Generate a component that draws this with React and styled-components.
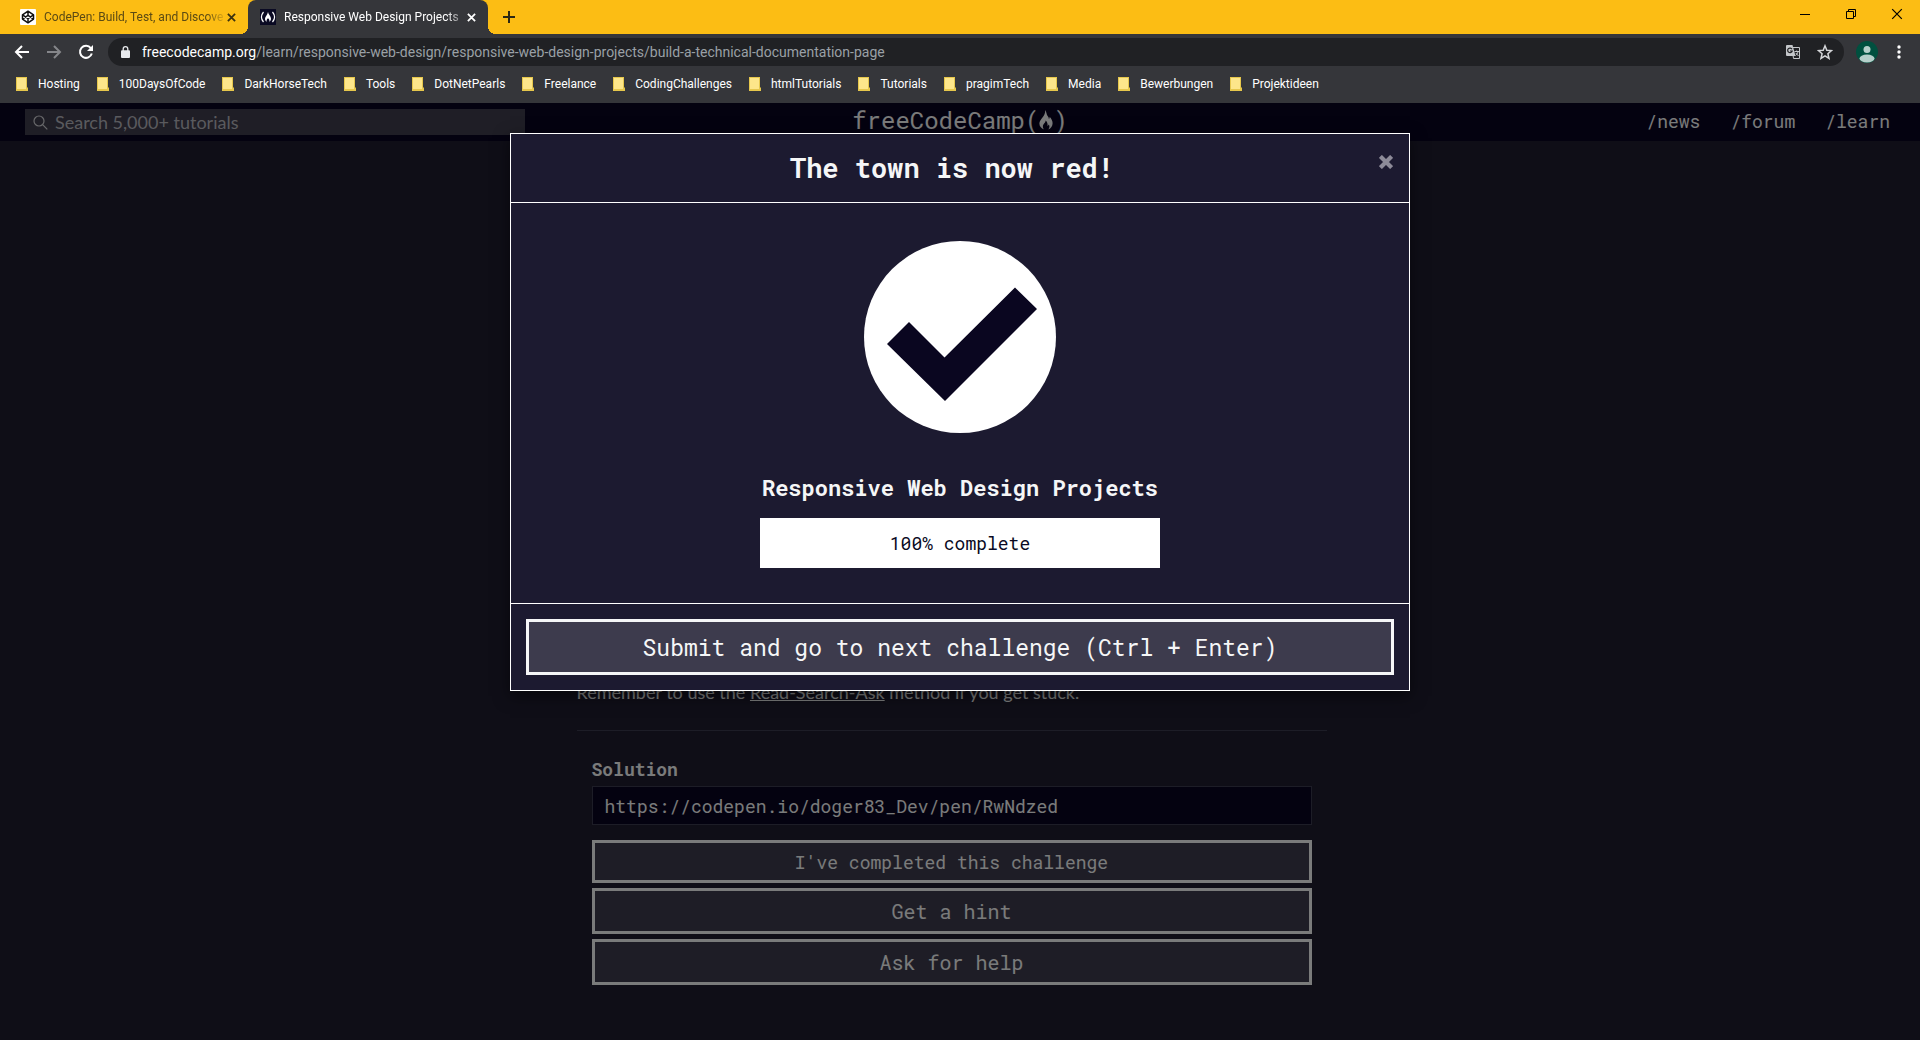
import React from "react";
import styled, { createGlobalStyle } from "styled-components";

const MONO = '"Roboto Mono", "Liberation Mono", monospace';
const UI = '"Segoe UI", Roboto, sans-serif';
const BODY = 'Lato, sans-serif';

const GlobalStyle = createGlobalStyle`
  *, *::before, *::after { box-sizing: border-box; }
  html, body { margin: 0; padding: 0; background: #0f0e18; }
  button, input { font: inherit; color: inherit; margin: 0; }
  h1, h2, p { margin: 0; }
`;

const Window = styled.div`
  display: flex;
  flex-direction: column;
  min-height: 100vh;
`;

/* ---------- browser frame ---------- */

const Frame = styled.header`
  background: #35363a;
  font-family: ${UI};
  font-size: 12px;
  color: #fff;
`;

const TabStrip = styled.div`
  display: flex;
  align-items: stretch;
  height: 34px;
  padding-left: 8px;
  background: #fcbd14;
`;

const Tab = styled.div`
  position: relative;
  display: flex;
  align-items: center;
  width: 240px;
  padding: 0 12px;
  border-radius: 8px 8px 0 0;
  background: ${(p) => (p.$active ? "#35363a" : "transparent")};
  color: ${(p) => (p.$active ? "#fff" : "#5b4a14")};

  &::before, &::after {
    content: "";
    display: ${(p) => (p.$active ? "block" : "none")};
    position: absolute;
    bottom: 0;
    width: 8px;
    height: 8px;
  }
  &::before {
    left: -8px;
    background: radial-gradient(circle at 0 0, transparent 8px, #35363a 8px);
  }
  &::after {
    right: -8px;
    background: radial-gradient(circle at 100% 0, transparent 8px, #35363a 8px);
  }
`;

const TabTitle = styled.span`
  flex: 1;
  min-width: 0;
  padding-left: 8px;
  overflow: hidden;
  white-space: nowrap;
  mask-image: linear-gradient(to right, #000 calc(100% - 20px), transparent);
`;

const IconButton = styled.button`
  display: flex;
  align-items: center;
  justify-content: center;
  width: ${(p) => p.$w || 16}px;
  height: ${(p) => p.$h || 16}px;
  padding: 0;
  border: 0;
  background: none;
  color: ${(p) => p.$color || "inherit"};
`;

const WindowControls = styled.div`
  display: flex;
  margin-left: auto;
`;

const Toolbar = styled.div`
  display: flex;
  align-items: center;
  gap: 16px;
  height: 36px;
  padding: 0 16px 0 14px;
`;

const Address = styled.div`
  flex: 1;
  display: flex;
  align-items: center;
  gap: 12px;
  height: 28px;
  margin: 0 -4px 0 -2px;
  padding: 0 11px 0 13px;
  border-radius: 14px;
  background: #202124;
  color: #e8eaed;
`;

const Url = styled.span`
  flex: 1;
  font-size: 14px;
  color: #9aa0a6;
  white-space: nowrap;
  overflow: hidden;
`;

const Host = styled.span`
  color: #fff;
`;

const AddressActions = styled.div`
  display: flex;
  gap: 16px;
`;

const Bookmarks = styled.nav`
  display: flex;
  align-items: center;
  gap: 17px;
  height: 33px;
  padding: 0 16px 5px;
  overflow: hidden;
`;

const Bookmark = styled.a`
  display: flex;
  align-items: center;
  gap: 10px;
  color: #fff;
  text-decoration: none;
  white-space: nowrap;
`;

/* ---------- page ---------- */

const Page = styled.div`
  position: relative;
  flex: 1;
  display: flex;
  flex-direction: column;
  background: #1e1c2e;
  color: #f5f6f7;
`;

const SiteNav = styled.div`
  display: grid;
  grid-template-columns: 1fr auto 1fr;
  align-items: center;
  height: 38px;
  padding: 0 25px;
  background: #090520;
`;

const Search = styled.label`
  display: flex;
  align-items: center;
  gap: 7px;
  width: 500px;
  height: 26px;
  padding-left: 8px;
  background: #3e3c4c;
  color: #d0d0d5;

  input {
    flex: 1;
    min-width: 0;
    padding: 0;
    border: 0;
    outline: 0;
    background: none;
    font: 18px/26px ${BODY};
  }
  input::placeholder { color: #b4b4bc; opacity: 1; }
`;

const Logo = styled.a`
  display: flex;
  align-items: center;
  padding-bottom: 4px;
  font: 24px/32px ${MONO};
  color: #f5f6f7;
  text-decoration: none;
`;

const SiteLinks = styled.nav`
  display: flex;
  justify-content: flex-end;
  gap: 30px;
  padding: 0 5px 2px 0;
  font: 18px/26px ${MONO};

  a { color: #f5f6f7; text-decoration: none; }
`;

const Scroller = styled.div`
  flex: 1;
  display: flex;
  flex-direction: column;
  justify-content: flex-end;
  padding: 0 17px 55px 0;
`;

const Main = styled.main`
  width: 100%;
  max-width: 750px;
  margin: 0 auto;
`;

const Instructions = styled.p`
  font: 18px/26px ${BODY};
  padding-bottom: 25px;
  border-bottom: 1px solid #3b3b4f;

  a { color: inherit; }
`;

const Form = styled.form`
  display: flex;
  flex-direction: column;
  gap: 5px;
  padding: 25px 15px 0;
  font: 18px/26px ${MONO};
`;

const Field = styled.label`
  display: flex;
  flex-direction: column;
  gap: 4px;
  padding-bottom: 10px;
  font-weight: 700;

  input {
    height: 39px;
    padding: 0 12px;
    border: 1px solid #3b3b4f;
    background: #090520;
    font-weight: 400;
    outline: 0;
  }
`;

const Button = styled.button`
  width: 100%;
  height: ${(p) => p.$h}px;
  padding: 0;
  border: 3px solid #f5f6f7;
  background: #3d3b4d;
  color: #f5f6f7;
  font: ${(p) => p.$size}px/26px ${MONO};
`;

/* ---------- modal ---------- */

const Backdrop = styled.div`
  position: absolute;
  inset: 0;
  padding: 30px 10px;
  background: rgba(0, 0, 0, 0.5);
`;

const Dialog = styled.section`
  max-width: 900px;
  margin: 0 auto;
  border: 1px solid #fff;
  background: #1c1a30;
  box-shadow: 0 5px 15px rgba(0, 0, 0, 0.5);
  font-family: ${MONO};
`;

const DialogHeader = styled.div`
  display: flex;
  align-items: flex-start;
  height: 69px;
  padding: 15px;
  border-bottom: 1px solid #fff;

  h1 {
    flex: 1;
    font-size: 27px;
    line-height: 38px;
    text-align: center;
  }
`;

const DialogBody = styled.div`
  display: flex;
  flex-direction: column;
  align-items: center;
  padding: 38px 15px 35px;

  h2 {
    margin: 40px 0 15px;
    font-size: 22px;
    line-height: 30px;
  }
`;

const Progress = styled.div`
  width: 400px;
  max-width: 100%;
  background: #fff;
  color: #0a0a23;
  font-size: 18px;
  line-height: 50px;
  text-align: center;
`;

const DialogFooter = styled.div`
  padding: 15px;
  border-top: 1px solid #fff;
`;

/* ---------- icons ---------- */

const Cross = ({ size = 9, width = 2 }) => (
  <svg width={size} height={size} viewBox="0 0 10 10" stroke="currentColor" strokeWidth={width} fill="none">
    <path d="M1 1l8 8M9 1l-8 8" />
  </svg>
);

const CodepenIcon = () => (
  <svg width="16" height="16" viewBox="0 0 16 16">
    <rect width="16" height="16" rx="1" fill="#fff" />
    <g fill="none" stroke="#111" strokeWidth="1.5" strokeLinejoin="round">
      <path d="M8 2.2l5.5 3.7v4.2L8 13.8l-5.5-3.7V5.9z" />
      <path d="M2.5 5.9L8 9.7l5.5-3.8M2.5 10.1L8 6.3l5.5 3.8M8 2.2v4.1M8 9.7v4.1" />
    </g>
  </svg>
);

const Flame = ({ width, height }) => (
  <svg width={width} height={height} viewBox="0 0 14 20" fill="currentColor">
    <path d="M6.2 0C7.8 2.5 7.2 4.3 9 6.5c.5.7.9 1.5.9 2.4.6-.5.9-1.3.7-2.2C12.5 8.6 13.6 11 13.6 13.3c0 3-1.7 5.2-4.2 6.2 1.3-1.8 1.4-3.6.3-4.9-.1.7-.5 1.2-1.2 1.3.4-2.2-.3-4.3-1.9-5.5.2 2.2-2.7 3.4-2.7 6 0 1.3.5 2.3 1.3 3C2 18.5.4 16.2.4 13.5.4 9.2 6.7 6.5 6.2 0z" />
  </svg>
);

const FccIcon = () => (
  <svg width="16" height="16" viewBox="0 0 16 16">
    <rect width="16" height="16" fill="#0a0a23" />
    <path d="M3.500 3C1 6 1 10 3.500 13M12.500 3c2.500 3 2.500 7 0 10" fill="none" stroke="#fff" strokeWidth="1.200" />
    <path d="M8 3c.3 2.500 3 4 3 6.800 0 1.300-.7 2.300-1.700 2.900.4-1.300.1-2.300-1.300-3.500-1.300 1.200-1.700 2.200-1.300 3.500C5.700 12.100 5 11.100 5 9.800 5 7.500 7.500 6 8 3z" fill="#fff" />
  </svg>
);

const Arrow = ({ flip }) => (
  <svg width="16" height="16" viewBox="0 0 16 16" fill="none" stroke="currentColor" strokeWidth="2">
    <path d={flip ? "M1 8h13M8 2l6 6-6 6" : "M15 8H2M8 2L2 8l6 6"} />
  </svg>
);

const Reload = () => (
  <svg width="16" height="16" viewBox="0 0 16 16">
    <path d="M12.8 4.2A6 6 0 1 0 13.8 9.5" fill="none" stroke="currentColor" strokeWidth="2" />
    <path d="M15 1v6H9z" fill="currentColor" />
  </svg>
);

const Lock = () => (
  <svg width="9" height="12" viewBox="0 0 9 12">
    <path d="M2.2 5V3a2.3 2.3 0 0 1 4.6 0v2" fill="none" stroke="currentColor" strokeWidth="1.3" />
    <rect y="4.3" width="9" height="7.7" rx="1" fill="currentColor" />
  </svg>
);

const Translate = () => (
  <svg width="16" height="16" viewBox="0 0 16 16">
    <path d="M7 3.5h7.500v11H8.500z" fill="none" stroke="#c4c7ca" />
    <path d="M2 1h5.500l3 11H2a1 1 0 0 1-1-1V2a1 1 0 0 1 1-1z" fill="#c4c7ca" />
    <path d="M7 5.2A2.3 2.3 0 1 0 7.2 7H5" fill="none" stroke="#202124" strokeWidth="1.2" />
    <path d="M9.500 7.500H14M11.700 6.500v1M13 7.500c-.4 2-1.300 3-2.500 4M10.800 9l2.700 3" fill="none" stroke="#c4c7ca" />
  </svg>
);

const Star = () => (
  <svg width="16" height="16" viewBox="0 0 16 16" fill="none" stroke="#d4d6d9" strokeWidth="1.5">
    <path d="M8 1.8l1.8 4.4 4.7.4-3.6 3.1 1.1 4.6L8 11.8l-4 2.5 1.100-4.6L1.500 6.6l4.7-.4z" />
  </svg>
);

const Avatar = () => (
  <svg width="22" height="22" viewBox="0 0 22 22">
    <circle cx="11" cy="11" r="11" fill="#00503f" />
    <circle cx="11" cy="8.5" r="3.5" fill="#b5cfca" />
    <ellipse cx="11" cy="17.5" rx="7.5" ry="4" fill="#b5cfca" />
  </svg>
);

const Dots = () => (
  <svg width="4" height="14" viewBox="0 0 4 14" fill="currentColor">
    <circle cx="2" cy="2" r="1.7" />
    <circle cx="2" cy="7" r="1.7" />
    <circle cx="2" cy="12" r="1.7" />
  </svg>
);

const Folder = () => (
  <svg width="12" height="14" viewBox="0 0 12 14">
    <path d="M0 0h11v10l1 1v3H0z" fill="#e6c74c" />
    <path d="M1 1h9v11H1z" fill="#fde68a" />
  </svg>
);

const Magnifier = () => (
  <svg width="15" height="15" viewBox="0 0 15 15" fill="none" stroke="currentColor" strokeWidth="1.2">
    <circle cx="6" cy="6" r="5" />
    <path d="M9.6 9.6L14.3 14.3" />
  </svg>
);

const CheckMark = () => (
  <svg width="192" height="192" viewBox="0 0 192 192" role="img" aria-label="Passed">
    <circle cx="96" cy="96" r="96" fill="#fff" />
    <path d="M23 103l22-22 35.5 35.5L151 46.5 173 68 81 160z" fill="#0a0620" />
  </svg>
);

const bookmarks = [
  "Hosting", "100DaysOfCode", "DarkHorseTech", "Tools", "DotNetPearls", "Freelance",
  "CodingChallenges", "htmlTutorials", "Tutorials", "pragimTech", "Media", "Bewerbungen", "Projektideen",
];

export default function App() {
  return (
    <Window>
      <GlobalStyle />
      <Frame>
        <TabStrip>
          <Tab>
            <CodepenIcon />
            <TabTitle>CodePen: Build, Test, and Discove</TabTitle>
            <IconButton aria-label="Close tab" $w={9} $color="#3b3210"><Cross /></IconButton>
          </Tab>
          <Tab $active>
            <FccIcon />
            <TabTitle>Responsive Web Design Projects</TabTitle>
            <IconButton aria-label="Close tab" $w={9}><Cross /></IconButton>
          </Tab>
          <IconButton aria-label="New tab" $w={42} $h={34} $color="#2c2814">
            <svg width="12" height="12" viewBox="0 0 12 12" stroke="currentColor" strokeWidth="2">
              <path d="M6 0v12M0 6h12" />
            </svg>
          </IconButton>
          <WindowControls>
            <IconButton aria-label="Minimize" $w={46} $h={28} $color="#000">
              <svg width="10" height="10" viewBox="0 0 10 10" stroke="currentColor"><path d="M0 5.5h10" /></svg>
            </IconButton>
            <IconButton aria-label="Restore" $w={46} $h={28} $color="#000">
              <svg width="10" height="10" viewBox="0 0 10 10" fill="none" stroke="currentColor">
                <path d="M.5 2.5h7v7h-7zM2.500 2.500v-2h7v7h-2" />
              </svg>
            </IconButton>
            <IconButton aria-label="Close window" $w={46} $h={28} $color="#000"><Cross size={12} width={1} /></IconButton>
          </WindowControls>
        </TabStrip>
        <Toolbar>
          <IconButton aria-label="Back"><Arrow /></IconButton>
          <IconButton aria-label="Forward" $color="#85868a"><Arrow flip /></IconButton>
          <IconButton aria-label="Reload"><Reload /></IconButton>
          <Address>
            <Lock />
            <Url>
              <Host>freecodecamp.org</Host>
              /learn/responsive-web-design/responsive-web-design-projects/build-a-technical-documentation-page
            </Url>
            <AddressActions>
              <IconButton aria-label="Translate"><Translate /></IconButton>
              <IconButton aria-label="Bookmark this page"><Star /></IconButton>
            </AddressActions>
          </Address>
          <IconButton aria-label="Profile" $w={22} $h={22}><Avatar /></IconButton>
          <IconButton aria-label="Menu" $w={10}><Dots /></IconButton>
        </Toolbar>
        <Bookmarks>
          {bookmarks.map((name) => (
            <Bookmark href="#" key={name}><Folder />{name}</Bookmark>
          ))}
        </Bookmarks>
      </Frame>

      <Page>
        <SiteNav>
          <Search>
            <Magnifier />
            <input type="search" aria-label="Search" placeholder="Search 5,000+ tutorials" />
          </Search>
          <Logo href="#">freeCodeCamp(<Flame width={14} height={20} />)</Logo>
          <SiteLinks>
            <a href="#">/news</a>
            <a href="#">/forum</a>
            <a href="#">/learn</a>
          </SiteLinks>
        </SiteNav>
        <Scroller>
          <Main>
            <Instructions>
              Remember to use the <a href="#">Read-Search-Ask</a> method if you get stuck.
            </Instructions>
            <Form>
              <Field>
                Solution
                <input type="url" defaultValue="https://codepen.io/doger83_Dev/pen/RwNdzed" />
              </Field>
              <Button type="button" $h={43} $size={18}>I've completed this challenge</Button>
              <Button type="button" $h={46} $size={20}>Get a hint</Button>
              <Button type="button" $h={46} $size={20}>Ask for help</Button>
            </Form>
          </Main>
        </Scroller>
        <Backdrop>
          <Dialog role="dialog" aria-labelledby="dialog-title">
            <DialogHeader>
              <h1 id="dialog-title">The town is now red!</h1>
              <IconButton aria-label="Close" $w={16} $h={26} $color="#8d8b98"><Cross size={14} width={3} /></IconButton>
            </DialogHeader>
            <DialogBody>
              <CheckMark />
              <h2>Responsive Web Design Projects</h2>
              <Progress>100% complete</Progress>
            </DialogBody>
            <DialogFooter>
              <Button type="button" $h={56} $size={23}>Submit and go to next challenge (Ctrl + Enter)</Button>
            </DialogFooter>
          </Dialog>
        </Backdrop>
      </Page>
    </Window>
  );
}
